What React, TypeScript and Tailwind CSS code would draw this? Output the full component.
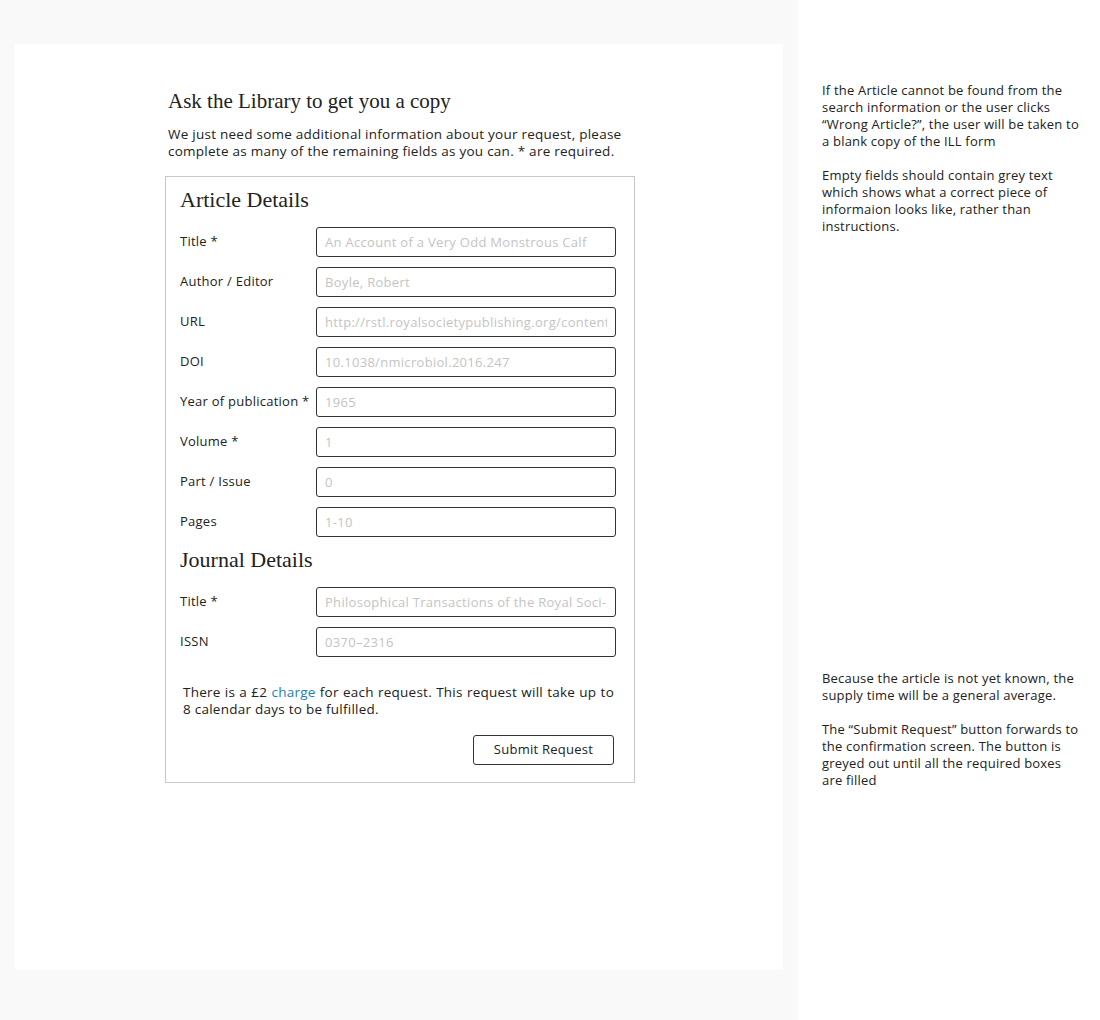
import React from "react"

const serif = "font-['Liberation_Serif',serif]"
const sans = "font-['Open_Sans','Noto_Sans',sans-serif]"

const articleFields = [
  { label: "Title *", placeholder: "An Account of a Very Odd Monstrous Calf" },
  { label: "Author / Editor", placeholder: "Boyle, Robert" },
  { label: "URL", placeholder: "http://rstl.royalsocietypublishing.org/content" },
  { label: "DOI", placeholder: "10.1038/nmicrobiol.2016.247" },
  { label: "Year of publication *", placeholder: "1965" },
  { label: "Volume *", placeholder: "1" },
  { label: "Part / Issue", placeholder: "0" },
  { label: "Pages", placeholder: "1-10" },
]

const journalFields = [
  { label: "Title *", placeholder: "Philosophical Transactions of the Royal Soci-" },
  { label: "ISSN", placeholder: "0370\u20132316" },
]

function Field({ label, placeholder }: { label: string; placeholder: string }) {
  return (
    <div className="flex items-center h-[30px]">
      <label className="w-[136px] shrink-0 text-[13px] tracking-[0.25px] text-[#222] whitespace-nowrap">{label}</label>
      <input
        placeholder={placeholder}
        className={`w-[300px] h-[30px] border border-[#333] rounded-[3px] px-[8px] text-[13px] tracking-[0.3px] placeholder:text-[#c4c4c4] outline-none ${sans}`}
      />
    </div>
  )
}

export default function App() {
  return (
    <div className={`flex w-[1100px] h-[1020px] ${sans} text-[#222]`}>
      {/* Wireframe area */}
      <div className="w-[798px] h-full bg-[#f9f9f9] pt-[44px] pl-[15px]">
        <div className="w-[768px] h-[926px] bg-white pt-[45px]">
          <div className="ml-[150px] w-[470px]">
            <h1 className={`${serif} text-[21px] leading-[24px] pl-[3px] text-[#222]`}>
              Ask the Library to get you a copy
            </h1>
            <p className="mt-[13px] pl-[3px] pr-[8px] text-[13.5px] tracking-[0.25px] leading-[17px]">
              We just need some additional information about your request, please complete as many of
              the remaining fields as you can. * are required.
            </p>

            <div className="mt-[16px] border border-[#c8c8c8] pl-[14px] pr-[18px] pt-[10px] pb-[17px]">
              <h2 className={`${serif} text-[22px] leading-[26px] text-[#222]`}>Article Details</h2>
              <div className="mt-[14px] flex flex-col gap-[10px]">
                {articleFields.map((f) => (
                  <Field key={f.label} {...f} />
                ))}
              </div>

              <h2 className={`${serif} text-[22px] leading-[26px] mt-[10px] text-[#222]`}>Journal Details</h2>
              <div className="mt-[14px] flex flex-col gap-[10px]">
                {journalFields.map((f) => (
                  <Field key={f.label} {...f} />
                ))}
              </div>

              <p className="mt-[27px] pl-[3px] pr-[2px] text-[13.5px] tracking-[0.25px] leading-[17px] text-justify">
                There is a £2 <span className="text-[#1a7fb8]">charge</span> for each request. This request
                will take up to 8 calendar days to be fulfilled.
              </p>

              <div className="mt-[17px] flex justify-end pr-[2px]">
                <button className="w-[141px] h-[30px] border border-[#333] rounded-[3px] text-[13px] tracking-[0.25px] bg-white">
                  Submit Request
                </button>
              </div>
            </div>
          </div>
        </div>
      </div>

      {/* Annotations */}
      <div className="flex-1 bg-white pl-[24px] pr-[20px] pt-[82px] text-[13px] tracking-[0.2px] leading-[17px] text-[#222]">
        <p>
          If the Article cannot be found from the search information or the user clicks “Wrong
          Article?”, the user will be taken to a blank copy of the ILL form
        </p>
        <p className="mt-[17px]">
          Empty fields should contain grey text which shows what a correct piece of informaion looks
          like, rather than instructions.
        </p>

        <p className="mt-[435px]">
          Because the article is not yet known, the supply time will be a general average.
        </p>
        <p className="mt-[17px]">
          The “Submit Request” button forwards to the confirmation screen. The button is greyed out
          until all the required boxes are filled
        </p>
      </div>
    </div>
  )
}
